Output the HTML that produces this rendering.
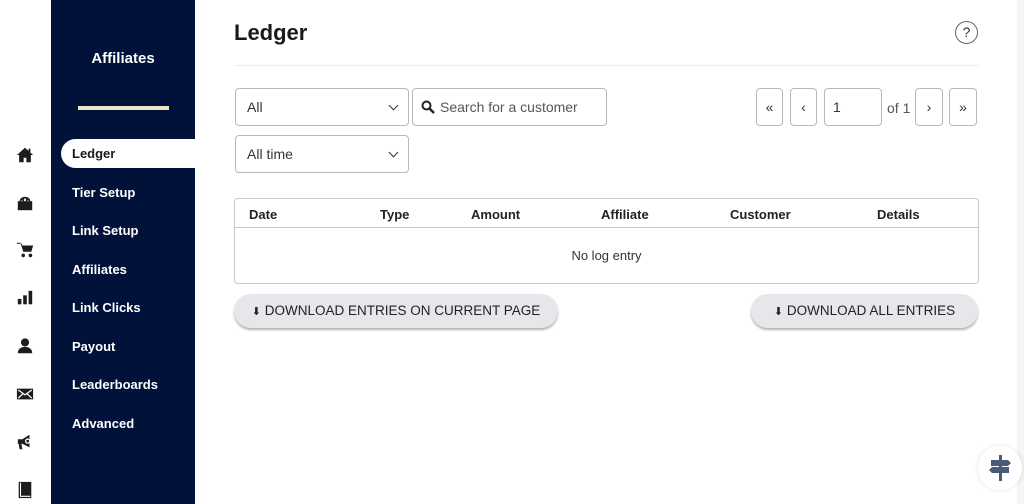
<!DOCTYPE html>
<html><head><style>
*{box-sizing:border-box;margin:0;padding:0}
body{width:1024px;height:504px;overflow:hidden;background:#fff;font-family:"Liberation Sans",sans-serif;position:relative;color:#222}
.rail{position:absolute;left:0;top:0;width:51px;height:504px;background:#fff}
.rail svg{position:absolute;left:16px;width:18px;height:18px;fill:#1c1c1c}
.side{position:absolute;left:51px;top:0;width:144px;height:504px;background:#00123a}
.side h2{position:absolute;top:50px;left:0;width:144px;text-align:center;color:#fff;font-size:15px;font-weight:bold}
.side .bar{position:absolute;left:27px;top:106px;width:91px;height:4px;background:#e9e6c3}
.item{position:absolute;left:21px;color:#fff;font-size:13px;font-weight:bold}
.active{position:absolute;left:10px;top:139px;width:134px;height:29px;background:#fff;border-radius:15px 0 0 15px}
.active span{position:absolute;left:11px;top:7px;color:#1a1a1a;font-size:13px;font-weight:bold}
.strip{position:absolute;left:1017px;top:0;width:7px;height:504px;background:#f4f4f4}
h1{position:absolute;left:234px;top:20px;font-size:22px;font-weight:bold;color:#1a1a1a}
.help{position:absolute;left:955px;top:21px;width:23px;height:23px;border:1px solid #666;border-radius:50%;text-align:center;font-size:14px;line-height:21px;color:#333}
.hr{position:absolute;left:234px;top:65px;width:745px;height:1px;background:#ececec}
.box{position:absolute;border:1px solid #b8b8b8;border-radius:4px;background:#fff;font-size:14px;color:#333}
.sel{padding-left:11px;line-height:36px}
.chev{position:absolute;right:11px;top:13px;width:7px;height:7px;border-right:1.5px solid #333;border-bottom:1.5px solid #333;transform:rotate(45deg)}
.pg{text-align:center;line-height:36px;font-size:14px}
.tbl{position:absolute;left:234px;top:198px;width:745px;height:86px;border:1px solid #c8c8c8;border-radius:4px;font-size:13px}
.th{position:absolute;top:8px;font-weight:bold;color:#222}
.tline{position:absolute;left:0;top:28px;width:743px;height:1px;background:#c8c8c8}
.btn{position:absolute;top:294px;height:34px;background:#e5e7eb;border-radius:17px;box-shadow:0 2px 2px rgba(0,0,0,.3);font-size:13.5px;color:#222;line-height:34px;text-align:center}
.fab{position:absolute;left:978px;top:446px;width:44px;height:44px;border-radius:50%;background:#fff;box-shadow:0 0 6px rgba(0,0,0,.1)}
</style></head><body>
<div class="rail">
<svg style="top:146px" viewBox="0 0 20 20"><path d="M10 2 1 10h2.5v8h5v-5h3v5h5v-8H19z"/><rect x="14" y="3" width="2" height="4"/></svg>
<svg style="top:194px" viewBox="0 0 20 20"><path d="M2 8h16v10H2z"/><path d="M4 8a6 5 0 0 1 12 0h-2a4 3 0 0 0-8 0z"/><rect x="7" y="4" width="2" height="4"/><rect x="11" y="4" width="2" height="4"/></svg>
<svg style="top:241px" viewBox="0 0 20 20"><path d="M1 2h4l3 10h9l2-7H7l-.5-2H1z"/><circle cx="8" cy="16" r="2"/><circle cx="16" cy="16" r="2"/></svg>
<svg style="top:289px" viewBox="0 0 20 20"><rect x="2" y="11" width="4" height="6"/><rect x="8" y="7" width="4" height="10"/><rect x="14" y="2" width="4" height="15"/></svg>
<svg style="top:337px" viewBox="0 0 20 20"><circle cx="10" cy="6" r="4.5"/><path d="M2 18c0-5 4-7 8-7s8 2 8 7z"/></svg>
<svg style="top:385px" viewBox="0 0 20 20"><path d="M1 4h18v12H1z"/><path d="M2.5 5.5 10 11l7.5-5.5M2.5 14.5l5.5-5M17.5 14.5l-5.5-5" stroke="#fff" stroke-width="1.4" fill="none"/></svg>
<svg style="top:433px" viewBox="0 0 20 20"><path d="M2 7h5l8-5v14l-8-4H6l1 6H4l-1-6H2z"/><circle cx="13" cy="9" r="3" fill="#fff"/><circle cx="13" cy="9" r="1.5"/></svg>
<svg style="top:481px" viewBox="0 0 20 20"><path d="M3 1h14v18H3z"/><path d="M5 2v15h11" stroke="#fff" stroke-width="1.2" fill="none"/></svg>
</div>
<div class="side">
<h2>Affiliates</h2><div class="bar"></div>
<div class="active"><span>Ledger</span></div>
<div class="item" style="top:185px">Tier Setup</div>
<div class="item" style="top:223px">Link Setup</div>
<div class="item" style="top:262px">Affiliates</div>
<div class="item" style="top:300px">Link Clicks</div>
<div class="item" style="top:339px">Payout</div>
<div class="item" style="top:377px">Leaderboards</div>
<div class="item" style="top:416px">Advanced</div>
</div>
<div class="strip"></div>
<h1>Ledger</h1>
<div class="help">?</div>
<div class="hr"></div>
<div class="box sel" style="left:235px;top:88px;width:174px;height:38px">All<div class="chev"></div></div>
<div class="box" style="left:412px;top:88px;width:195px;height:38px;line-height:36px;padding-left:27px;color:#555">
<svg style="position:absolute;left:8px;top:11px" width="14" height="14" viewBox="0 0 14 14"><circle cx="5.5" cy="5.5" r="4" stroke="#222" stroke-width="2" fill="none"/><path d="M8.5 8.5 13 13" stroke="#222" stroke-width="2.5"/></svg>Search for a customer</div>
<div class="box sel" style="left:235px;top:135px;width:174px;height:38px">All time<div class="chev"></div></div>
<div class="box pg" style="left:756px;top:88px;width:27px;height:38px">«</div>
<div class="box pg" style="left:790px;top:88px;width:27px;height:38px">‹</div>
<div class="box" style="left:824px;top:88px;width:58px;height:38px;line-height:36px;padding-left:8px">1</div>
<div style="position:absolute;left:887px;top:100px;font-size:14px;color:#555">of 1</div>
<div class="box pg" style="left:915px;top:88px;width:28px;height:38px">›</div>
<div class="box pg" style="left:949px;top:88px;width:28px;height:38px">»</div>
<div class="tbl">
<div class="th" style="left:14px">Date</div>
<div class="th" style="left:145px">Type</div>
<div class="th" style="left:236px">Amount</div>
<div class="th" style="left:366px">Affiliate</div>
<div class="th" style="left:495px">Customer</div>
<div class="th" style="left:642px">Details</div>
<div class="tline"></div>
<div style="position:absolute;left:0;top:49px;width:743px;text-align:center;color:#333">No log entry</div>
</div>
<div class="btn" style="left:234px;width:324px"><span style="font-size:11px">⬇</span> DOWNLOAD ENTRIES ON CURRENT PAGE</div>
<div class="btn" style="left:751px;width:227px"><span style="font-size:11px">⬇</span> DOWNLOAD ALL ENTRIES</div>
<div class="fab"><svg style="position:absolute;left:9px;top:8px" width="26" height="28" viewBox="0 0 26 28"><rect x="12" y="1" width="3" height="26" fill="#4b5a78"/><path d="M4 6h17l3 3-3 3H4z M22 13H5l-3 3 3 3h17z" fill="#4b5a78"/></svg></div>
</body></html>
